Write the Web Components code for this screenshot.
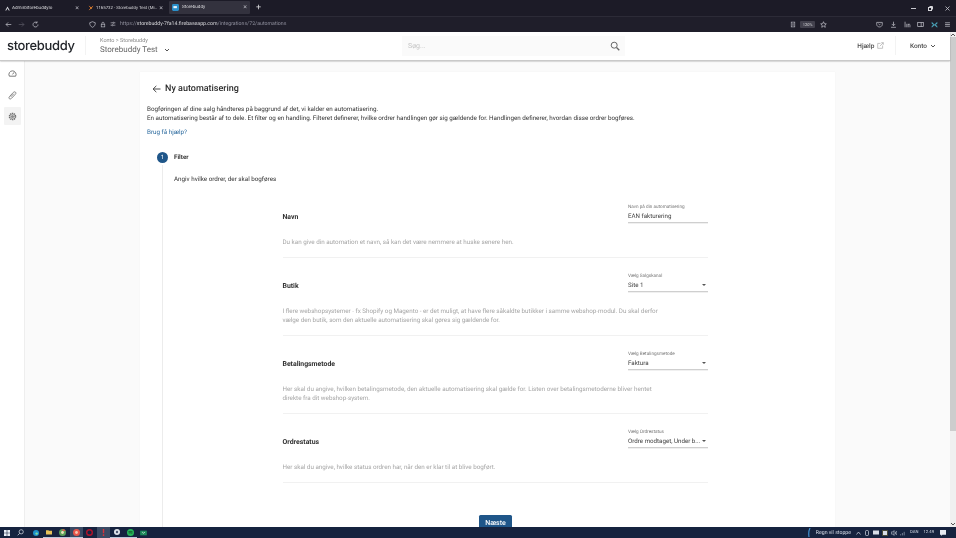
<!DOCTYPE html>
<html lang="da"><head><meta charset="utf-8"><title>Storebuddy</title>
<style>
html,body{margin:0;height:538px;overflow:hidden;background:#fafafa;font-family:Roboto,"Liberation Sans",sans-serif;text-rendering:geometricPrecision}
</style></head><body>
<app-window>
  <browser-tabs></browser-tabs>
  <browser-toolbar></browser-toolbar>
  <app-page></app-page>
  <win-taskbar></win-taskbar>
</app-window>
<script>
function def(name, html){
  customElements.define(name, class extends HTMLElement{
    constructor(){super();const s=this.attachShadow({mode:'open'});s.innerHTML=typeof html==='function'?html(this):html;}
  });
}
def('app-window','<style>:host{display:flex;flex-direction:column;height:538px;width:956px;overflow:hidden;filter:blur(.25px)}</style><slot></slot>');

def('browser-tabs',`<style>
:host{display:flex;height:16px;background:#1c1b27;color:#d7d7db;font:4.600px Roboto,sans-serif;flex:none}
.t{display:flex;align-items:center;height:16px;box-sizing:border-box;white-space:nowrap;overflow:hidden}
.t span{flex:1;min-width:0;overflow:hidden;text-overflow:clip}
.x{flex:none;font-size:7px;color:#c9c9d0;line-height:1;margin-left:1px}
.a{background:#33323e;border-radius:1px;height:13px;margin-top:1px}
svg{flex:none;display:block}
.plus{margin-left:6px;align-self:center;color:#d7d7db;font-size:9px;line-height:1}
.win{margin-left:auto;display:flex;align-items:center;color:#c9c9d0}
.win i{display:flex;justify-content:center;align-items:center;width:17px;height:16px}
</style>
<div class="t" style="width:84px;padding:0 5px 0 5px"><svg width="5" height="5" viewBox="0 0 10 10" style="margin-right:2px"><path d="M5 1L9.500 9H7.500L5 4.500 2.500 9H.5z" fill="#dfe1e6"/></svg><span>AdminStorebuddyIo</span><b class="x" style="font-weight:400">×</b></div>
<div class="t" style="width:82px;padding:0 3px 0 4px"><svg width="6" height="6" viewBox="0 0 10 10" style="margin-right:2px"><circle cx="5" cy="5" r="1.500" fill="#e8a13a"/><path d="M5 5L2 1.500M5 5L8.500 2M5 5L2 8.500" stroke="#d9762b" stroke-width="1.500"/></svg><span style="font-size:4.300px">1165732 - Storebuddy Test (Mi…</span><b class="x" style="font-weight:400">×</b></div>
<div class="t a" style="width:81px;margin-left:3px;padding:0 3px 0 3px"><svg width="7" height="7" viewBox="0 0 10 10" style="margin-right:3px"><rect width="10" height="10" rx="2" fill="#2a8fc9"/><rect x="2" y="3" width="5" height="3" fill="#e8f4fb"/></svg><span>Storebuddy</span><b class="x" style="font-weight:400">×</b></div>
<b class="plus" style="font-weight:400">+</b>
<div class="win"><i><svg width="5" height="5"><path d="M0 2.500H5" stroke="#c9c9d0"/></svg></i><i><svg width="5" height="5"><rect x=".5" y="1.500" width="3" height="3" fill="none" stroke="#d7d7db"/><path d="M1.500 .5H4.500V3.500" fill="none" stroke="#d7d7db"/></svg></i><i><svg width="5" height="5"><path d="M.5 .5L4.500 4.500M4.500 .5L.5 4.500" stroke="#c9c9d0" stroke-width=".8"/></svg></i></div>`);

def('browser-toolbar',`<style>
:host{display:flex;align-items:center;height:15.500px;background:#1f1e2a;border-top:.5px solid #2c2b37;box-sizing:border-box;flex:none;font:5px Roboto,sans-serif;color:#8f8f9d}
svg{display:block;flex:none}
.url{flex:1;white-space:nowrap;font-size:5.200px;margin-left:4px}
.url b{font-weight:400;color:#d7d7db}
.zoom{background:#42414d;color:#d7d7db;font-size:4px;padding:1px 2.500px;border-radius:1px;margin:0 5px 0 4px}
.s{stroke:#c6c6cf;fill:none;stroke-width:1}
</style>
<svg style="margin-left:5px" width="7" height="7" viewBox="0 0 10 10"><path class="s" d="M9 5H1.500M4.500 2L1.500 5 4.500 8"/></svg>
<svg style="margin-left:6px" width="7" height="7" viewBox="0 0 10 10"><path d="M1 5H8.500M5.500 2L8.500 5 5.500 8" stroke="#5a5965" fill="none"/></svg>
<svg style="margin-left:7px" width="7" height="7" viewBox="0 0 10 10"><path class="s" d="M8.500 5A3.500 3.500 0 1 1 7 2.200M7.200 .5V2.800H5"/></svg>
<svg style="margin-left:50px" width="7" height="7" viewBox="0 0 10 10"><path class="s" d="M5 1L9 2.500C9 6 7.500 8 5 9 2.500 8 1 6 1 2.500Z"/></svg>
<svg style="margin-left:4px" width="6" height="7" viewBox="0 0 10 10"><rect class="s" x="2" y="4.500" width="6" height="4.500"/><path class="s" d="M3.200 4.500V3A1.800 1.800 0 0 1 6.800 3V4.500"/></svg>
<svg style="margin-left:4px" width="6" height="6" viewBox="0 0 10 10"><path class="s" d="M1 3H5M7 3H9M1 7H3M5 7H9"/><circle class="s" cx="6" cy="3" r="1"/><circle class="s" cx="4" cy="7" r="1"/></svg>
<div class="url">https://<b>storebuddy-7fa14.firebaseapp.com</b>/integrations/72/automations</div>
<svg width="6" height="7" viewBox="0 0 10 10"><rect class="s" x="2" y="1" width="6" height="8"/><path class="s" d="M3.500 4H6.500M3.500 6H6.500"/></svg>
<span class="zoom">120%</span>
<svg width="7" height="7" viewBox="0 0 10 10"><path class="s" d="M5 1L6.200 3.800 9 4.100 6.900 6 7.500 9 5 7.400 2.500 9 3.100 6 1 4.100 3.800 3.800Z"/></svg>
<svg style="margin-left:49px" width="7" height="7" viewBox="0 0 10 10"><path class="s" d="M1 2H9V5C9 7 7 8.500 5 8.500 3 8.500 1 7 1 5ZM3.500 4L5 5.500 6.500 4"/></svg>
<svg style="margin-left:7px" width="7" height="7" viewBox="0 0 10 10"><path class="s" d="M5 1V6.500M2.500 4.200L5 6.700 7.500 4.200M1.500 9H8.500"/></svg>
<svg style="margin-left:7px" width="7" height="7" viewBox="0 0 10 10"><path class="s" d="M1.500 1V9M4 4V9M6 9V4M6 5.500C6.500 4 8.500 4 8.500 6V9"/></svg>
<svg style="margin-left:6px" width="7" height="7" viewBox="0 0 10 10"><rect class="s" x="1" y="2" width="8" height="6"/><path class="s" d="M6 2V8"/></svg>
<svg style="margin-left:7px" width="7" height="7" viewBox="0 0 10 10"><path d="M1 1L5 5 9 1V4L6.500 5.500 9 7V9.500L5 6 1 9.500V7L3.500 5.500 1 4Z" fill="#4aa3b8"/></svg>
<svg style="margin:0 5px 0 6px" width="7" height="7" viewBox="0 0 10 10"><path class="s" d="M1.500 2.500H8.500M1.500 5H8.500M1.500 7.500H8.500"/></svg>`);

def('app-page',`<style>
:host{display:flex;flex:1;min-height:0;overflow:hidden;background:#fafafa}
.col{flex:1;min-width:0;display:flex;flex-direction:column}
.body{display:flex;flex:1;min-height:0;overflow:hidden}
.view{flex:1;min-width:0;display:flex;overflow:hidden;padding:11px 0 0 115px;box-sizing:border-box}
</style>
<div class="col">
<app-header></app-header>
<div class="body">
  <side-nav></side-nav>
  <div class="view"><automation-card></automation-card></div>
</div>
</div>
<page-scrollbar></page-scrollbar>`);

def('app-header',`<style>
:host{display:flex;align-items:center;height:29.500px;background:#fff;flex:none;box-shadow:0 .5px 1.500px #00000055;border-bottom:1px solid #c9c9c9;box-sizing:border-box;position:relative;z-index:2;color:#3c3c3c}
.logo{font:500 13px Inter,"Liberation Sans",sans-serif;letter-spacing:-.35px;color:#23262b;margin-left:7px;width:78px;white-space:nowrap}
.sep{width:1px;height:19px;background:#f3f3f3}
.acc{margin-left:14px;width:302px}
.crumb{font-size:5.500px;color:#8a8a8a;line-height:6px;margin-top:2px}
.name{font-size:8px;color:#666;line-height:12px;display:flex;align-items:center;gap:6px;margin-top:0}
.search{width:223px;height:20px;background:#fafafa;display:flex;align-items:center;justify-content:space-between;padding:0 5px 0 6px;box-sizing:border-box;font-size:7px;color:#c4c4c4}
.right{margin-left:auto;display:flex;align-items:center;font-size:6.500px;font-weight:500;color:#4a4a4a}
.help{display:flex;align-items:center;gap:2.500px;padding-right:11px;height:19px;border-right:1px solid #f3f3f3}
.konto{display:flex;align-items:center;gap:3px;margin-left:14px;margin-right:14px}
svg{display:block}
</style>
<div class="logo">storebuddy</div><div class="sep"></div>
<div class="acc"><div class="crumb">Konto &gt; Storebuddy</div><div class="name">Storebuddy Test <svg width="6" height="4" viewBox="0 0 6 4"><path d="M1 1L3 3 5 1" fill="none" stroke="#555"/></svg></div></div>
<div class="search"><span>Søg...</span><svg width="10" height="10" viewBox="0 0 10 10"><circle cx="4.200" cy="4.200" r="3" fill="none" stroke="#666" stroke-width="1"/><path d="M6.500 6.500L9.300 9.300" stroke="#666" stroke-width="1.300"/></svg></div>
<div class="right"><div class="help"><span>Hjælp</span><svg width="7" height="7" viewBox="0 0 10 10"><path d="M5 2H1V9H8V5M4 6L9 1M6 1H9V4" fill="none" stroke="#aaa" stroke-width="1"/></svg></div><div class="konto"><span>Konto</span><svg width="6" height="4" viewBox="0 0 6 4"><path d="M1 1L3 3 5 1" fill="none" stroke="#555"/></svg></div></div>`);

def('side-nav',`<style>
:host{display:flex;flex-direction:column;align-items:center;width:25px;box-sizing:border-box;background:#fff;border-right:1px solid #eee;flex:none;padding-top:1px}
.i{width:17px;height:22px;display:flex;align-items:center;justify-content:center;box-sizing:border-box}
.on{background:#f3f3f3;height:18px;margin-top:1px;border-radius:1px}
svg{display:block}
</style>
<div class="i"><svg width="9" height="9" viewBox="0 0 10 10"><path d="M1.500 8A4 4 0 1 1 8.500 8ZM5 6L7 3.500" fill="none" stroke="#6d6d6d" stroke-width="1"/></svg></div>
<div class="i"><svg width="9" height="9" viewBox="0 0 10 10"><path d="M8.500 1.500C7.500 .5 6.500 1 6 1.500L1.800 6C.8 7 1 8 1.500 8.500S3 9 3.800 8.200L8 3.800C9 2.800 9 2 8.500 1.500ZM3 6.500L6.500 3" fill="none" stroke="#777" stroke-width="1"/></svg></div>
<div class="i on"><svg width="9" height="9" viewBox="0 0 10 10"><circle cx="5" cy="5" r="3.200" fill="none" stroke="#6d6d6d" stroke-width="2" stroke-dasharray="1.400 .6"/><circle cx="5" cy="5" r="1.800" fill="#8d8d8d"/></svg></div>`);

def('page-scrollbar',`<style>
:host{display:flex;flex-direction:column;width:6px;background:#f0f0f0;flex:none;align-self:stretch;position:relative}
.thumb{height:394px;margin-top:5px;background:#cdcdcd}
svg{display:block;position:absolute;left:1px}
</style><svg style="top:1px" width="4" height="3"><path d="M0 3L2 1 4 3" fill="none" stroke="#555"/></svg><div class="thumb"></div><svg style="bottom:1px" width="4" height="3"><path d="M0 0L2 2 4 0" fill="none" stroke="#555"/></svg>`);

def('automation-card',`<style>
:host{display:block;width:695px;background:#fff;flex:none;box-sizing:border-box;padding:0 7px;color:#333;font-size:6.280px;box-shadow:0 0 1px #0000000f;overflow:hidden}
.title{display:flex;align-items:center;gap:4px;height:12px;margin:10.500px 0 0 5px;font-size:9px;font-weight:500;color:#2c2c2c}
p{margin:0;line-height:9px;white-space:nowrap}
.intro{margin-top:10.500px}
.link{display:block;color:#2b6a9e;line-height:9px;margin-top:5px}
.steps{margin:15px 0 0 10px;display:grid;grid-template-columns:11px 1fr;column-gap:6px}
.num{width:11px;height:11px;border-radius:50%;background:#1f5689;color:#fff;font-size:6px;display:flex;align-items:center;justify-content:center}
.head{font-weight:700;line-height:11px}
.rail{grid-column:1;width:1px;background:#ececec;justify-self:center;margin-top:2px}
.content{grid-column:2}
.sub{line-height:9px;margin-top:11.500px}
.rows{margin:5px 0 0 108.500px;width:425.500px}
.next{display:block;width:33px;height:20px;line-height:16.500px;margin:32px 0 0 305px;background:#1f5689;color:#fff;text-align:center;font-size:7px;font-weight:500;border-radius:1.500px 1.500px 0 0}
svg{display:block}
</style>
<div class="title"><svg width="9" height="8" viewBox="0 0 10 9"><path d="M9.500 4.500H1.200M4.800 1L1.200 4.500 4.800 8" fill="none" stroke="#333" stroke-width="1"/></svg><span>Ny automatisering</span></div>
<p class="intro">Bogføringen af dine salg håndteres på baggrund af det, vi kalder en automatisering.</p>
<p>En automatisering består af to dele. Et filter og en handling. Filteret definerer, hvilke ordrer handlingen gør sig gældende for. Handlingen definerer, hvordan disse ordrer bogføres.</p>
<a class="link">Brug få hjælp?</a>
<div class="steps">
  <div class="num">1</div><div class="head">Filter</div>
  <div class="rail"></div>
  <div class="content">
    <p class="sub">Angiv hvilke ordrer, der skal bogføres</p>
    <div class="rows">
      <filter-row title="Navn" label="Navn på din automatisering" value="EAN fakturering">Du kan give din automation et navn, så kan det være nemmere at huske senere hen.</filter-row>
      <filter-row select title="Butik" label="Vælg Salgskanal" value="Site 1">I flere webshopsystemer - fx Shopify og Magento - er det muligt, at have flere såkaldte butikker i samme webshop-modul. Du skal derfor<br>vælge den butik, som den aktuelle automatisering skal gøres sig gældende for.</filter-row>
      <filter-row select title="Betalingsmetode" label="Vælg Betalingsmetode" value="Faktura">Her skal du angive, hvilken betalingsmetode, den aktuelle automatisering skal gælde for. Listen over betalingsmetoderne bliver hentet<br>direkte fra dit webshop-system.</filter-row>
      <filter-row select title="Ordrestatus" label="Vælg Ordrestatus" value="Ordre modtaget, Under b...">Her skal du angive, hvilke status ordren har, når den er klar til at blive bogført.</filter-row>
    </div>
    <a class="next">Næste</a>
  </div>
</div>`);

def('filter-row',(el)=>{
  const a=n=>(el.getAttribute(n)||'');
  const select=el.hasAttribute('select');
  return `<style>
:host{display:block;border-bottom:1px solid #f1f1f1;padding:16.500px 0 9.500px;box-sizing:border-box}
.top{display:grid;grid-template-columns:1fr 80px;height:17.500px;align-items:center}
.t{font-size:6.900px;font-weight:700;color:#333;padding-top:6.500px}
.lab{font-size:4.650px;color:#777;line-height:5.500px;white-space:nowrap}
.val{display:flex;align-items:center;justify-content:space-between;font-size:6.200px;line-height:10px;height:11px;color:#3e3e3e;border-bottom:1px solid #cfcfcf;box-shadow:0 1px 0 #f0f0f0;white-space:nowrap}
.ar{width:0;height:0;border:2.400px solid transparent;border-top:2.800px solid #555;border-bottom:0;margin-right:2px}
.h{margin-top:15.500px;font-size:6.280px;line-height:9px;color:#a6a6a6;white-space:nowrap}
</style>
<div class="top"><div class="t">${a('title')}</div><div><div class="lab">${a('label')}</div><div class="val"><span>${a('value')}</span>${select?'<i class="ar"></i>':''}</div></div></div>
<div class="h"><slot></slot></div>`});

def('win-taskbar',`<style>
:host{display:flex;align-items:center;height:11px;background:#16233f;flex:none;position:relative;z-index:3;color:#d7dde8;font:5.200px Roboto,sans-serif;white-space:nowrap}
svg{display:block;flex:none}
.ic{width:13.500px;height:11px;display:flex;align-items:center;justify-content:center;box-sizing:border-box}
.u{border-bottom:.5px solid #b9c7da}
.hl{background:#3a4963}
.right{margin-left:auto;display:flex;align-items:center;height:11px}
.tray{display:flex;margin:0 2.500px}
.tray i{width:9px;display:flex;justify-content:center;align-items:center}
</style>
<div class="ic" style="width:13px"><svg width="6" height="6"><path d="M0 0h2.700v2.700H0zM3.300 0H6v2.700H3.300zM0 3.300h2.700V6H0zM3.300 3.300H6V6H3.300z" fill="#e8eef6"/></svg></div>
<div class="ic" style="width:15px"><svg width="7" height="7" viewBox="0 0 10 10"><circle cx="6" cy="4" r="3" fill="none" stroke="#dfe5ee"/><path d="M3.800 6.200L1 9" stroke="#dfe5ee"/></svg></div>
<div class="ic" style="margin-left:1px"><svg width="6" height="6" viewBox="0 0 10 10"><circle cx="5" cy="5" r="5" fill="#1e90c9"/><circle cx="6" cy="6" r="2" fill="#7fe0a0"/></svg></div>
<div class="ic u"><svg width="6" height="6" viewBox="0 0 10 10"><path d="M0 2H4L5 3H10V9H0Z" fill="#e6c15a"/></svg></div>
<div class="ic u"><svg width="7" height="7" viewBox="0 0 10 10"><circle cx="5" cy="5" r="5" fill="#5d9e5a"/><path d="M5 0A5 5 0 0 1 9.500 3H5Z" fill="#d9584a"/><circle cx="5" cy="5" r="2" fill="#e9e3c0"/></svg></div>
<div class="ic u hl"><svg width="7" height="7" viewBox="0 0 10 10"><circle cx="5" cy="5" r="5" fill="#e8554a"/><circle cx="5" cy="5" r="2" fill="#f4c6b0"/></svg></div>
<div class="ic"><svg width="7" height="7" viewBox="0 0 10 10"><circle cx="5" cy="5" r="4" fill="none" stroke="#b0122a" stroke-width="2"/></svg></div>
<div class="ic hl"><svg width="5" height="7" viewBox="0 0 6 10"><path d="M2 0H4V6H2ZM2 7.500H4V10H2Z" fill="#d8333a"/></svg></div>
<div class="ic u"><svg width="6" height="6" viewBox="0 0 10 10"><circle cx="5" cy="5" r="5" fill="#dfe3ea"/><circle cx="5" cy="5" r="2" fill="#4a5670"/></svg></div>
<div class="ic u"><svg width="7" height="7" viewBox="0 0 10 10"><circle cx="5" cy="5" r="5" fill="#26b75a"/><path d="M2 4C4 3.200 6 3.400 8 4.200M2.500 5.700C4 5.200 6 5.300 7.500 6" stroke="#10321e" fill="none"/></svg></div>
<div class="ic"><svg width="7" height="6" viewBox="0 0 10 9"><path d="M0 1H10V8H0Z" fill="#1f8a5b"/><path d="M3 3L5 5 7 3" stroke="#fff" fill="none"/></svg></div>
<div class="right">
<svg width="3" height="9" viewBox="0 0 3 9" style="margin-right:5px"><path d="M2 0C.5 3 .5 6 1 9" stroke="#3f8fd0" fill="none" stroke-width="1.200"/></svg>
<span>Regn vil stoppe</span>
<div class="tray">
<i><svg width="5" height="4"><path d="M.5 3.500L2.500 1 4.500 3.500" stroke="#d7dde8" fill="none" stroke-width=".7"/></svg></i>
<i><svg width="4" height="6"><rect x=".5" y=".5" width="3" height="5" rx="1" fill="none" stroke="#d7dde8" stroke-width=".7"/></svg></i>
<i><svg width="6" height="5"><rect width="6" height="4" y=".5" fill="#d7dde8"/></svg></i>
<i><svg width="6" height="6"><rect width="6" height="6" fill="#4a4a3a"/><rect x="1" y="1" width="4" height="4" fill="#d7dde8"/></svg></i>
<i><svg width="6" height="6" viewBox="0 0 10 10"><path d="M0 3.500H2.500L5 1V9L2.500 6.500H0ZM7 3A3 3 0 0 1 7 7M8.500 1.500A5 5 0 0 1 8.500 8.500" fill="none" stroke="#d7dde8"/></svg></i>
<i><svg width="6" height="6" viewBox="0 0 10 10"><path d="M1 9V7M4 9V5M7 9V3" stroke="#aeb8c8"/></svg></i>
</div>
<span style="font-size:4.200px">DAN</span>
<span style="margin-left:5px;font-size:4.200px">12.49</span>
<svg style="margin:0 10px 0 6px" width="6" height="6" viewBox="0 0 10 10"><path d="M0 0H10V8H4L2 10V8H0Z" fill="#e6eaf2"/></svg>
</div>`);
</script>
</body></html>
